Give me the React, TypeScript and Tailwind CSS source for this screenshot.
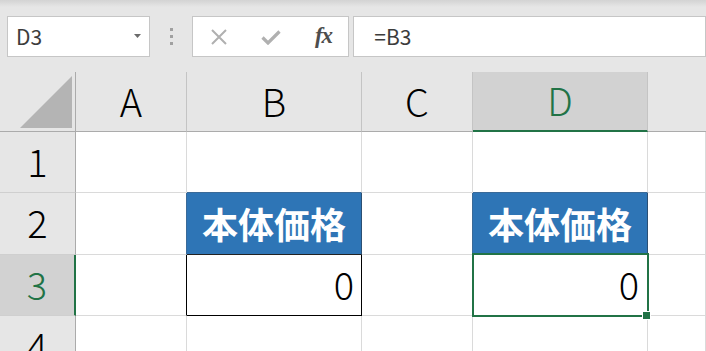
import React from "react";

const FONT = { fontFamily: '"Noto Sans CJK JP", "Noto Sans", sans-serif' };

function ColHead({ label, selected, last }: { label?: string; selected?: boolean; last?: boolean }) {
  return (
    <div
      className={`flex items-center justify-center text-[38px] font-light leading-none ${
        last ? "" : "border-r border-r-[#c4c4c4]"
      } ${
        selected
          ? "bg-[#d2d2d2] text-[#217346] border-b-2 border-b-[#217346]"
          : "bg-[#e6e6e6] text-black border-b border-b-[#ababab]"
      }`}
    >
      <span className="-mt-[2px]">{label}</span>
    </div>
  );
}

function RowHead({ label, selected }: { label: string; selected?: boolean }) {
  return (
    <div
      className={`flex items-center justify-center text-[38px] font-light leading-none border-b border-b-[#cfcfcf] ${
        selected
          ? "bg-[#d2d2d2] text-[#217346] border-r-2 border-r-[#217346]"
          : "bg-[#e6e6e6] text-black border-r border-r-[#ababab]"
      }`}
    >
      <span className="-mt-[3px]">{label}</span>
    </div>
  );
}

function Cell({ className = "", children }: { className?: string; children?: React.ReactNode }) {
  return <div className={`bg-white border-r border-b ${className}`}>{children}</div>;
}

export default function App() {
  return (
    <div className="w-[706px] h-[351px] overflow-hidden bg-[#e6e6e6] relative" style={FONT}>
      {/* toolbar */}
      <div className="h-[72px] bg-[linear-gradient(to_bottom,#d3d3d3_0px,#e6e6e6_7px)] pt-[16px] pl-[7px] flex items-start">
        <div className="w-[146px] h-[41px] border border-[#c6c6c6] bg-white flex items-center pl-[8px] pr-[8px]">
          <span className="text-[21px] text-[#3c3c3c] leading-none flex-1 -mt-[1px]">D3</span>
          <svg width="7" height="4" viewBox="0 0 7 4" className="mt-[-2px]">
            <path d="M0 0 H7 L3.5 4 Z" fill="#6b6b6b" />
          </svg>
        </div>
        <div className="w-[43px] h-[41px] flex flex-col items-center justify-center gap-[4px]">
          <div className="w-[3px] h-[3px] bg-[#a0a0a0]" />
          <div className="w-[3px] h-[3px] bg-[#a0a0a0]" />
          <div className="w-[3px] h-[3px] bg-[#a0a0a0]" />
        </div>
        <div className="w-[157px] h-[41px] border border-[#c6c6c6] bg-white flex items-center">
          <div className="w-[52px] flex justify-center">
            <svg width="18" height="16" viewBox="0 0 18 16">
              <path d="M2 1 L16 15 M16 1 L2 15" stroke="#b0b0b0" strokeWidth="2" fill="none" />
            </svg>
          </div>
          <div className="w-[52px] flex justify-center">
            <svg width="20" height="16" viewBox="0 0 20 16">
              <path d="M1.5 8.5 L7 14 L18.5 2.5" stroke="#b0b0b0" strokeWidth="3.2" fill="none" />
            </svg>
          </div>
          <div className="w-[52px] flex justify-center pl-[2px]">
            <span
              className="italic font-bold text-[23px] leading-none text-[#4d4d4d] -mt-[3px] tracking-[-1px]"
              style={{ fontFamily: '"Liberation Serif", "DejaVu Serif", serif' }}
            >
              fx
            </span>
          </div>
        </div>
        <div className="ml-[4px] w-[360px] h-[41px] border border-[#c6c6c6] bg-white flex items-center pl-[20px]">
          <span className="text-[21px] text-[#3c3c3c] leading-none -mt-[1px]">=B3</span>
        </div>
      </div>

      {/* sheet grid */}
      <div className="relative grid grid-cols-[76px_111px_175px_111px_175px_1fr] grid-rows-[60px_61px_62px_61px_62px]">
        {/* header row */}
        <div className="bg-[#e6e6e6] border-r border-r-[#ababab] border-b border-b-[#ababab] flex items-end justify-end pr-[3px] pb-[3px]">
          <svg width="52" height="52" viewBox="0 0 52 52">
            <path d="M52 0 L52 52 L0 52 Z" fill="#b4b4b4" />
          </svg>
        </div>
        <ColHead label="A" />
        <ColHead label="B" />
        <ColHead label="C" />
        <ColHead label="D" selected />
        <ColHead last />

        {/* row 1 */}
        <RowHead label="1" />
        <Cell className="border-[#dadada]" />
        <Cell className="border-r-[#dadada] border-b-[#3a6a98]" />
        <Cell className="border-[#dadada]" />
        <Cell className="border-r-[#dadada] border-b-[#3a6a98]" />
        <Cell className="border-[#dadada]" />

        {/* row 2 */}
        <RowHead label="2" />
        <Cell className="border-r-[#3a6a98] border-b-[#dadada]" />
        <div className="bg-[#2e75b6] border-r border-b border-r-[#2b4f73] border-b-[#222222] flex items-center justify-center">
          <span className="text-white font-bold text-[36px] leading-none -mt-[2px]">本体価格</span>
        </div>
        <Cell className="border-r-[#3a6a98] border-b-[#dadada]" />
        <div className="bg-[#2e75b6] border-r border-b border-r-[#2b4f73] border-b-[#2b4f73] flex items-center justify-center">
          <span className="text-white font-bold text-[36px] leading-none -mt-[2px]">本体価格</span>
        </div>
        <Cell className="border-[#dadada]" />

        {/* row 3 */}
        <RowHead label="3" selected />
        <Cell className="border-r-black border-b-[#dadada]" />
        <Cell className="border-r-black border-b-black flex items-center justify-end pr-[7px]">
          <span className="text-[38px] font-light leading-none text-black -mt-[3px]">0</span>
        </Cell>
        <Cell className="border-[#dadada]" />
        <Cell className="border-[#dadada] flex items-center justify-end pr-[8px]">
          <span className="text-[38px] font-light leading-none text-black -mt-[3px]">0</span>
        </Cell>
        <Cell className="border-[#dadada]" />

        {/* row 4 */}
        <RowHead label="4" />
        <Cell className="border-[#dadada]" />
        <Cell className="border-[#dadada]" />
        <Cell className="border-[#dadada]" />
        <Cell className="border-[#dadada]" />
        <Cell className="border-[#dadada]" />

        {/* selection overlay on D3 */}
        <div className="absolute left-[472px] top-[181px] w-[177px] h-[64px] border-2 border-[#217346] pointer-events-none" />
        <div className="absolute left-[643px] top-[240px] w-[7px] h-[7px] bg-[#217346] outline outline-1 outline-white pointer-events-none" />
      </div>
    </div>
  );
}
